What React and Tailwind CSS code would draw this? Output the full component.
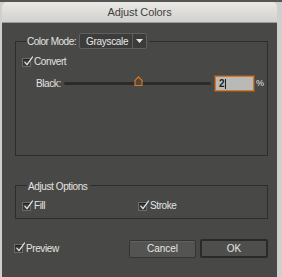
import { useState } from 'react'

const FONT = { fontFamily: '"Liberation Sans", Arial, sans-serif' }

function Check({ checked = true }) {
  return (
    <span className="relative inline-block w-[9px] h-[9px] shrink-0 bg-[#3b3b3a] border border-[#6b6b69] shadow-[inset_0_1px_1px_rgba(0,0,0,0.5)]">
      {checked && (
        <svg className="absolute left-[0px] top-[-3px]" width="11" height="11" viewBox="0 0 11 11">
          <path d="M1.8 6.2 L4 8.6 L9.5 1" fill="none" stroke="#f2f2f2" strokeWidth="1.2" strokeLinecap="round" strokeLinejoin="round" />
        </svg>
      )}
    </span>
  )
}

function CheckRow({ label, className = '' }) {
  return (
    <label className={`flex items-center gap-[3px] ${className}`}>
      <Check />
      <span className="text-[10px] leading-none text-[#e4e4e2] tracking-[-0.4px]">{label}</span>
    </label>
  )
}

export default function App() {
  const [black] = useState(2)

  return (
    <div className="w-[282px] h-[277px] bg-[#cfcfcd] overflow-hidden pl-[2px] pr-[5px] border-t-2 border-[#555]" style={FONT}>
      <div className="h-full flex flex-col rounded-t-[5px] overflow-hidden">
        <div className="h-[21px] shrink-0 flex items-center justify-center bg-gradient-to-b from-[#ebe9e6] to-[#d3d1cd] border-b border-[#9d9b98]">
          <span className="text-[11px] text-[#3f3f3f] tracking-[-0.1px]">Adjust Colors</span>
        </div>

        <div className="flex-1 bg-[#484846] pl-[13px] pr-[9px] pt-[10px]">
          <fieldset className="border border-[#2d2d2c] h-[123px] pl-[6px]">
            <legend className="ml-[5px] pr-[2px] flex items-center gap-[3px]">
              <span className="text-[10px] text-[#e4e4e2] tracking-[-0.5px]">Color Mode:</span>
              <span className="flex items-center h-[16px] w-[68px] bg-[#3c3c3b] border border-[#5f5f5d] rounded-[2px]">
                <span className="flex-1 pl-[6px] text-[10px] text-[#e8e8e6] tracking-[-0.3px]">Grayscale</span>
                <span className="w-[14px] h-full border-l border-[#5f5f5d] flex items-center justify-center">
                  <svg width="7" height="4" viewBox="0 0 7 4"><path d="M0 0 H7 L3.5 4 Z" fill="#e6e6e6" /></svg>
                </span>
              </span>
            </legend>

            <CheckRow label="Convert" className="mt-[8px]" />

            <div className="flex items-center mt-[9px] ml-[14px]">
              <span className="text-[10px] text-[#e4e4e2] w-[28px] tracking-[-0.4px]">Black:</span>
              <div className="relative w-[147px] h-[3px] bg-[#2b2b2a] rounded-full">
                <svg className="absolute left-[70px] top-[-6px]" width="9" height="10" viewBox="0 0 9 10">
                  <path d="M1 9.5 V4.5 L4.5 0.8 L8 4.5 V9.5 Z" fill="#484846" stroke="#d9761f" strokeWidth="1.2" />
                </svg>
              </div>
              <div className="ml-[4px] w-[39px] h-[15px] border border-[#d9761f] bg-[#b9b9b7] flex items-center pl-[3px] shadow-[0_0_0_1px_rgba(217,118,31,0.35)]">
                <span className="text-[10px] font-bold text-[#1e1e1e] leading-none">{black}</span>
                <span className="w-px h-[10px] bg-[#1e1e1e]" />
              </div>
              <span className="ml-[2px] text-[9px] text-[#e4e4e2]">%</span>
            </div>
          </fieldset>

          <fieldset className="mt-[17px] border border-[#2d2d2c] h-[46px] pl-[6px]">
            <legend className="ml-[5px] pl-px pr-[3px]">
              <span className="text-[10px] text-[#e4e4e2] tracking-[-0.4px]">Adjust Options</span>
            </legend>
            <div className="flex items-center mt-[4px]">
              <CheckRow label="Fill" className="w-[116px]" />
              <CheckRow label="Stroke" />
            </div>
          </fieldset>

          <div className="flex items-center mt-[20px] -ml-px">
            <CheckRow label="Preview" className="flex-1" />
            <button className="w-[67px] h-[18px] bg-[#545452] border border-[#343433] rounded-[2px] text-[10px] text-[#e6e6e4] shadow-[inset_0_1px_0_rgba(255,255,255,0.08)]">
              Cancel
            </button>
            <button className="ml-[4px] w-[68px] h-[19px] bg-[#4e4e4c] border-2 border-[#2a2a29] rounded-[2px] text-[10px] text-[#e6e6e4]">
              OK
            </button>
          </div>
        </div>
      </div>
    </div>
  )
}
